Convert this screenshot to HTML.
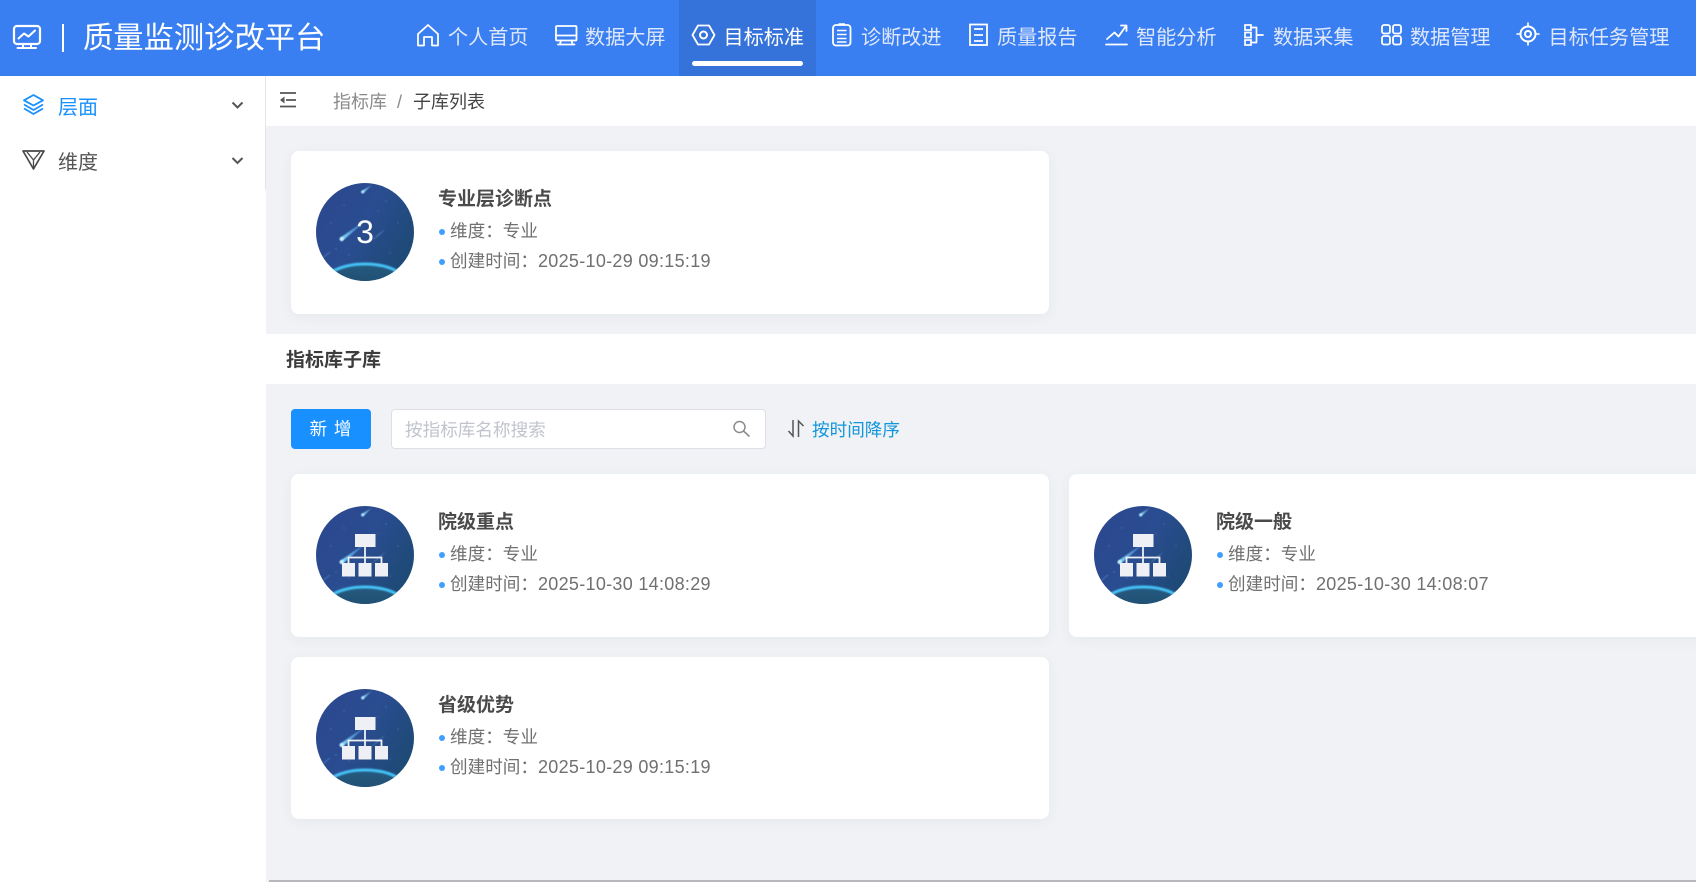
<!DOCTYPE html>
<html lang="zh-CN">
<head>
<meta charset="utf-8">
<title>质量监测诊改平台</title>
<style>
html,body{margin:0;padding:0;width:1696px;height:882px;overflow:hidden;background:#fff;}
body{position:relative;font-family:"Liberation Sans","Noto Sans CJK SC",sans-serif;}
.b{position:absolute;}
.t{position:absolute;white-space:nowrap;line-height:30px;height:30px;}
.nav{font-size:20.15px;color:#dfe8fb;top:23px;}
.card{position:absolute;width:758px;height:163px;background:#fff;border-radius:8px;box-shadow:0 3px 14px rgba(60,70,100,.05);}
.ct{position:absolute;left:147px;top:34px;font-size:19px;font-weight:700;color:#4a4a4a;line-height:30px;white-space:nowrap;}
.cl{position:absolute;left:159px;font-size:17.6px;color:#707070;line-height:30px;white-space:nowrap;}
.cl span{letter-spacing:.3px;font-size:18px;}
.dot{position:absolute;left:148px;width:6px;height:6px;border-radius:50%;background:#409eff;}
.av{position:absolute;left:25px;top:32px;width:98px;height:98px;}
</style>
</head>
<body>
<svg width="0" height="0" style="position:absolute">
<defs>
<linearGradient id="g" x1="0" y1="0" x2="1" y2=".6"><stop offset="0" stop-color="#2c478f"/><stop offset=".55" stop-color="#2a4c90"/><stop offset="1" stop-color="#1e4a76"/></linearGradient>
<linearGradient id="p" x1="0" y1="0" x2="0" y2="1"><stop offset="0" stop-color="#265a80"/><stop offset="1" stop-color="#18405f"/></linearGradient>
<linearGradient id="m1" gradientUnits="userSpaceOnUse" x1="46.7" y1="8.7" x2="57" y2="1"><stop offset="0" stop-color="#8fdcff"/><stop offset="1" stop-color="#8fdcff" stop-opacity="0"/></linearGradient>
<linearGradient id="m2" gradientUnits="userSpaceOnUse" x1="25.7" y1="56" x2="55.7" y2="32.7"><stop offset="0" stop-color="#7fdcff"/><stop offset=".6" stop-color="#5aa8e8" stop-opacity=".5"/><stop offset="1" stop-color="#5aa8e8" stop-opacity="0"/></linearGradient>
<linearGradient id="m3" gradientUnits="userSpaceOnUse" x1="55.7" y1="57.7" x2="70" y2="45.3"><stop offset="0" stop-color="#6a9fdc" stop-opacity=".1"/><stop offset=".5" stop-color="#6a9fdc" stop-opacity=".6"/><stop offset="1" stop-color="#6a9fdc" stop-opacity="0"/></linearGradient>
<clipPath id="c"><circle cx="49" cy="49" r="49"/></clipPath>
<filter id="s" x="-10%" y="-10%" width="120%" height="120%"><feGaussianBlur stdDeviation=".5"/></filter>
<filter id="s2" x="-10%" y="-30%" width="120%" height="160%"><feGaussianBlur stdDeviation=".7"/></filter>
<symbol id="bg" viewBox="0 0 98 98">
<g clip-path="url(#c)">
<rect width="98" height="98" fill="url(#g)"/>
<g filter="url(#s)">
<g fill="#6f9fd8" opacity=".45">
<circle cx="28" cy="22" r=".7"/><circle cx="70" cy="18" r=".7"/><circle cx="15" cy="40" r=".7"/><circle cx="82" cy="40" r=".7"/><circle cx="20" cy="66" r=".8"/><circle cx="33" cy="72" r=".7"/><circle cx="62" cy="28" r=".6"/><circle cx="74" cy="70" r=".6"/>
</g>
<path d="M45.6 8L57 1L47.6 10Z" fill="url(#m1)"/>
<circle cx="46.7" cy="8.9" r="1.6" fill="#a8e6ff"/>
<path d="M24.5 54.5L55.7 32.7L27 57.5Z" fill="url(#m2)"/>
<circle cx="25.7" cy="56" r="2.2" fill="#c2f0ff"/>
<path d="M55.7 57.7L70 45.3" stroke="url(#m3)" stroke-width="1.3"/>
<path d="M7.3 74.3L14 69" stroke="#5a8fd0" stroke-width="1.2" opacity=".5"/>
</g>
<ellipse cx="49" cy="104" rx="44" ry="23" fill="url(#p)"/>
<ellipse cx="49" cy="104" rx="44" ry="23" fill="none" stroke="#45c3f7" stroke-width="3" filter="url(#s2)"/>
</g>
</symbol>
<symbol id="org" viewBox="0 0 98 98">
<g fill="#eef0f6">
<rect x="39" y="28" width="20.5" height="13"/>
<rect x="26" y="57" width="13" height="13.5"/>
<rect x="42.5" y="57" width="13" height="13.5"/>
<rect x="59" y="57" width="13" height="13.5"/>
</g>
<path d="M49 41V57M32.5 57V51.5H65.5V57" fill="none" stroke="#eef0f6" stroke-width="1.8"/>
</symbol>
</defs>
</svg>

<!-- backgrounds -->
<div class="b" style="left:0;top:0;width:1696px;height:76px;background:#3a7ff1;"></div>
<div class="b" style="left:679px;top:0;width:137px;height:76px;background:#3572da;"></div>
<div class="b" style="left:692px;top:61px;width:111px;height:5px;border-radius:3px;background:#fff;"></div>
<div class="b" style="left:266px;top:76px;width:1430px;height:806px;background:#f0f2f5;"></div>
<div class="b" style="left:266px;top:76px;width:1430px;height:50px;background:#fff;"></div>
<div class="b" style="left:265px;top:76px;width:1px;height:114px;background:#e6e6e6;"></div>
<div class="b" style="left:266px;top:334px;width:1430px;height:50px;background:#fff;"></div>
<div class="b" style="left:269px;top:880px;width:1427px;height:2px;background:#b8b9bd;"></div>

<!-- header text -->
<div class="t" style="left:83px;top:24px;font-size:30.3px;color:#fff;">质量监测诊改平台</div>
<div class="t nav" style="left:448px;">个人首页</div>
<div class="t nav" style="left:585px;">数据大屏</div>
<div class="t nav" style="left:723.5px;color:#fff;">目标标准</div>
<div class="t nav" style="left:861px;">诊断改进</div>
<div class="t nav" style="left:997px;">质量报告</div>
<div class="t nav" style="left:1136px;">智能分析</div>
<div class="t nav" style="left:1273px;">数据采集</div>
<div class="t nav" style="left:1410px;">数据管理</div>
<div class="t nav" style="left:1548.5px;">目标任务管理</div>

<!-- sidebar -->
<div class="t" style="left:58px;top:93px;font-size:20px;color:#1890ff;">层面</div>
<div class="t" style="left:58px;top:148px;font-size:20px;color:#555;">维度</div>

<!-- breadcrumb -->
<div class="t" style="left:333px;top:87px;font-size:18px;color:#8a8a8a;">指标库</div>
<div class="t" style="left:397px;top:87px;font-size:18px;color:#8a8a8a;">/</div>
<div class="t" style="left:413px;top:87px;font-size:18px;color:#444;">子库列表</div>

<!-- top card -->
<div class="card" style="left:291px;top:151px;">
  <svg class="av"><use href="#bg" width="98" height="98"/></svg>
  <div style="position:absolute;left:25px;top:32px;width:98px;height:98px;line-height:98px;text-align:center;color:#fff;font-size:32px;">3</div>
  <div class="ct">专业层诊断点</div>
  <div class="dot" style="top:78px;"></div>
  <div class="cl" style="top:65px;">维度：专业</div>
  <div class="dot" style="top:108px;"></div>
  <div class="cl" style="top:95px;">创建时间：<span>2025-10-29 09:15:19</span></div>
</div>

<!-- section -->
<div class="t" style="left:286px;top:346px;font-size:19px;font-weight:700;color:#3c3c3c;">指标库子库</div>

<!-- toolbar -->
<div class="b" style="left:291px;top:409px;width:80px;height:40px;background:#1890ff;border-radius:4px;color:#fff;font-size:17.5px;line-height:41px;text-align:center;letter-spacing:1px;">新 增</div>
<div class="b" style="left:391px;top:409px;width:373px;height:38px;background:#fff;border:1px solid #dcdfe6;border-radius:4px;"></div>
<div class="t" style="left:405px;top:415px;font-size:17.6px;color:#c0c4cc;">按指标库名称搜索</div>
<div class="t" style="left:812px;top:415px;font-size:17.6px;color:#1296db;">按时间降序</div>

<!-- list cards -->
<div class="card" style="left:291px;top:474px;">
  <svg class="av"><use href="#bg" width="98" height="98"/><use href="#org" width="98" height="98"/></svg>
  <div class="ct">院级重点</div>
  <div class="dot" style="top:78px;"></div>
  <div class="cl" style="top:65px;">维度：专业</div>
  <div class="dot" style="top:108px;"></div>
  <div class="cl" style="top:95px;">创建时间：<span>2025-10-30 14:08:29</span></div>
</div>
<div class="card" style="left:1069px;top:474px;">
  <svg class="av"><use href="#bg" width="98" height="98"/><use href="#org" width="98" height="98"/></svg>
  <div class="ct">院级一般</div>
  <div class="dot" style="top:78px;"></div>
  <div class="cl" style="top:65px;">维度：专业</div>
  <div class="dot" style="top:108px;"></div>
  <div class="cl" style="top:95px;">创建时间：<span>2025-10-30 14:08:07</span></div>
</div>
<div class="card" style="left:291px;top:657px;height:162px;">
  <svg class="av"><use href="#bg" width="98" height="98"/><use href="#org" width="98" height="98"/></svg>
  <div class="ct">省级优势</div>
  <div class="dot" style="top:78px;"></div>
  <div class="cl" style="top:65px;">维度：专业</div>
  <div class="dot" style="top:108px;"></div>
  <div class="cl" style="top:95px;">创建时间：<span>2025-10-29 09:15:19</span></div>
</div>

<!-- icons overlay -->
<svg class="b" style="left:0;top:0;" width="1696" height="882" viewBox="0 0 1696 882" fill="none">
  <g stroke="#fff" stroke-width="2" stroke-linejoin="round" stroke-linecap="round">
    <!-- logo -->
    <rect x="14" y="26" width="26" height="18" rx="3" stroke-width="2.2"/>
    <path d="M18.5 38.5L24 33.5L28.5 36.5L35 30.5M23 44V48M31 44V48M17.5 48H36" />
    <path d="M63 24V52" stroke-linecap="butt"/>
    <!-- home -->
    <path d="M418 34L428 25L438 34V45.5H432V37H424V45.5H418Z" stroke-width="1.8"/>
    <!-- screen -->
    <rect x="556" y="26" width="20.5" height="14.5" rx="1" stroke-width="1.8"/>
    <path d="M556 35.5H576.5M561 40.5L560 44M571.5 40.5L572.5 44M558 44.5H574.5" stroke-width="1.8"/>
    <!-- hexagon -->
    <path d="M698 25.5H709L714.5 35L709 44.5H698L692.5 35Z" stroke-width="1.8"/>
    <circle cx="703.5" cy="35" r="3.5" stroke-width="2"/>
    <!-- clipboard -->
    <rect x="833" y="25" width="17.5" height="20.5" rx="3" stroke-width="1.8"/>
    <path d="M838.5 24H845M837 30.5H846.5M837 34.5H846.5M837 38.5H846.5M837 42H846.5" stroke-width="1.6" stroke-linecap="butt"/>
    <!-- report -->
    <rect x="970" y="24.5" width="17" height="20.5" stroke-width="1.8" stroke-linejoin="miter"/>
    <path d="M974 29H983M974 35H983M974 41H983" stroke-width="1.7" stroke-linecap="butt"/>
    <!-- chart -->
    <path d="M1106 44.5H1127M1107 39L1114.5 32.5L1118.5 36.5L1126 26M1121 25.5H1126.5V31" stroke-width="1.8"/>
    <!-- collect -->
    <rect x="1245" y="25" width="6" height="5" stroke-width="1.7" stroke-linejoin="miter"/>
    <rect x="1245" y="32.5" width="6" height="5" stroke-width="1.7" stroke-linejoin="miter"/>
    <rect x="1245" y="40" width="6" height="5" stroke-width="1.7" stroke-linejoin="miter"/>
    <path d="M1251 27.5H1256.5V42.5H1251M1256.5 35H1263" stroke-width="1.7"/>
    <!-- grid -->
    <rect x="1382" y="25" width="8" height="8.5" rx="2" stroke-width="1.8"/>
    <rect x="1393" y="25" width="8" height="8.5" rx="2" stroke-width="1.8"/>
    <rect x="1382" y="36" width="8" height="8.5" rx="2" stroke-width="1.8"/>
    <rect x="1393" y="36" width="8" height="8.5" rx="2" stroke-width="1.8"/>
    <!-- target -->
    <circle cx="1528" cy="34" r="7.5" stroke-width="2"/>
    <circle cx="1528" cy="34" r="3" stroke-width="2"/>
    <path d="M1528 23V26M1528 42V45M1517 34H1520M1536 34H1539" stroke-width="1.6"/>
  </g>
  <!-- sidebar icons -->
  <g stroke="#1890ff" stroke-width="1.8" stroke-linejoin="round">
    <path d="M33.5 95L43 100.3L33.5 105.5L24 100.3Z"/>
    <path d="M24 104.5L33.5 110L43 104.5M24 108.5L33.5 114L43 108.5"/>
  </g>
  <g stroke="#484848" stroke-width="1.7" stroke-linejoin="round">
    <path d="M23 151H44L33.5 169Z"/>
    <path d="M33.5 169V160M33.5 160L27 152M33.5 160L40 152" stroke-width="1.3"/>
  </g>
  <path d="M232.5 102.5L237.5 107.5L242.5 102.5M232.5 158L237.5 163L242.5 158" stroke="#555" stroke-width="2"/>
  <!-- hamburger -->
  <path d="M280 93H296M286 100H296M280 106.5H296" stroke="#555" stroke-width="1.7"/>
  <path d="M284.5 96.5V103.5L280 100Z" fill="#555"/>
  <!-- search -->
  <circle cx="739.5" cy="427" r="5.5" stroke="#8c8c8c" stroke-width="1.5"/>
  <path d="M743.5 431L749.5 436.5" stroke="#8c8c8c" stroke-width="1.6"/>
  <!-- sort -->
  <path d="M793 420V436L788.5 431M798.5 437V421L803.5 426" stroke="#555" stroke-width="1.5"/>
</svg>
</body>
</html>
